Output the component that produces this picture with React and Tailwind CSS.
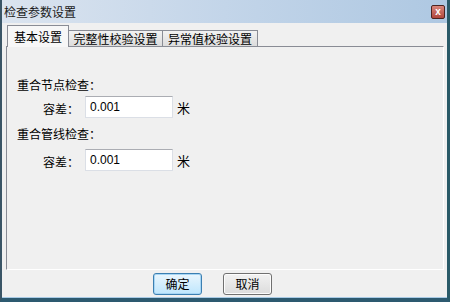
const cjk = { fontFamily: '"Noto Sans CJK SC", "Liberation Sans", sans-serif' }

function Tab({ label, active, width }) {
  if (active) {
    return (
      <div
        className={`relative z-10 mb-[-1px] flex h-[22px] items-center justify-center border border-b-0 border-[#898c95] bg-[#f7f7f7] text-[12px] ${width}`}
      >
        {label}
      </div>
    )
  }
  return (
    <div
      className={`flex h-[16px] items-center justify-center border border-b-0 border-l-0 border-[#898c95] bg-gradient-to-b from-[#f2f2f2] to-[#dcdcdc] text-[12px] leading-none ${width}`}
    >
      {label}
    </div>
  )
}

function ToleranceRow({ value }) {
  return (
    <div className="flex h-[22px] items-center">
      <span className="ml-[26px] w-[42px] pt-[3px] text-[12px]">容差：</span>
      <div className="flex h-[22px] w-[88px] items-center border border-[#dbdfe6] border-t-[#abadb3] bg-white pl-[4px]">
        <span className="text-[12px]" style={{ fontFamily: '"Liberation Sans", sans-serif' }}>
          {value}
        </span>
      </div>
      <span className="ml-[4px] pt-[2px] text-[13px]">米</span>
    </div>
  )
}

function Button({ label, focused }) {
  return (
    <button
      className={`flex h-[22px] w-[49px] items-center justify-center rounded-[3px] border text-[12px] ${
        focused
          ? 'border-[#3c7fb1] bg-gradient-to-b from-[#eaf6fd] to-[#bee6fd] shadow-[inset_0_0_0_1px_#a7d6f5]'
          : 'border-[#707070] bg-gradient-to-b from-[#f2f2f2] to-[#dcdcdc] shadow-[inset_0_0_0_1px_#fcfcfc]'
      }`}
    >
      {label}
    </button>
  )
}

export default function App() {
  return (
    <div
      className="flex h-[302px] w-[450px] flex-col border-b-[4px] border-l-[2px] border-r-[3px] border-b-[#2d5a70] border-l-[#3a5566] border-r-[#2a5a68] bg-[#f0f0f0] text-[#000]"
      style={cjk}
    >
      <div className="flex h-[23px] shrink-0 items-center justify-between bg-gradient-to-r from-[#dbe4ef] via-[#c3d5e9] to-[#aec8e2] pl-[2px] pr-[2px]">
        <span className="text-[12px] text-[#1a1a1a]">检查参数设置</span>
        <div className="flex h-[14px] w-[14px] items-center justify-center rounded-[2px] border border-[#4d2420] bg-gradient-to-b from-[#d9867c] to-[#b0463c]">
          <span className="text-[10px] font-bold leading-none text-white" style={{ fontFamily: '"Liberation Sans", sans-serif' }}>
            x
          </span>
        </div>
      </div>

      <div className="flex h-[23px] shrink-0 items-end pl-[5px]">
        <Tab label="基本设置" active width="w-[62px]" />
        <Tab label="完整性校验设置" width="w-[94px]" />
        <Tab label="异常值校验设置" width="w-[95px] border-l" />
      </div>

      <div className="ml-[4px] mr-[3px] flex h-[224px] shrink-0 flex-col border border-b-white border-l-[#898c95] border-r-white border-t-[#898c95] bg-[#f0f0f0]">
        <div className="pl-[10px] pt-[30px]">
          <div className="h-[16px] text-[12px] leading-[16px]">重合节点检查：</div>
          <div className="mt-[3px]">
            <ToleranceRow value="0.001" />
          </div>
          <div className="mt-[8px] h-[16px] text-[12px] leading-[16px]">重合管线检查：</div>
          <div className="mt-[7px]">
            <ToleranceRow value="0.001" />
          </div>
        </div>
      </div>

      <div className="mt-[3px] flex gap-[21px] pl-[151px]">
        <Button label="确定" focused />
        <Button label="取消" />
      </div>
      <div className="flex-1" />
      <div className="h-px bg-[#a9cbe6]" />
    </div>
  )
}
